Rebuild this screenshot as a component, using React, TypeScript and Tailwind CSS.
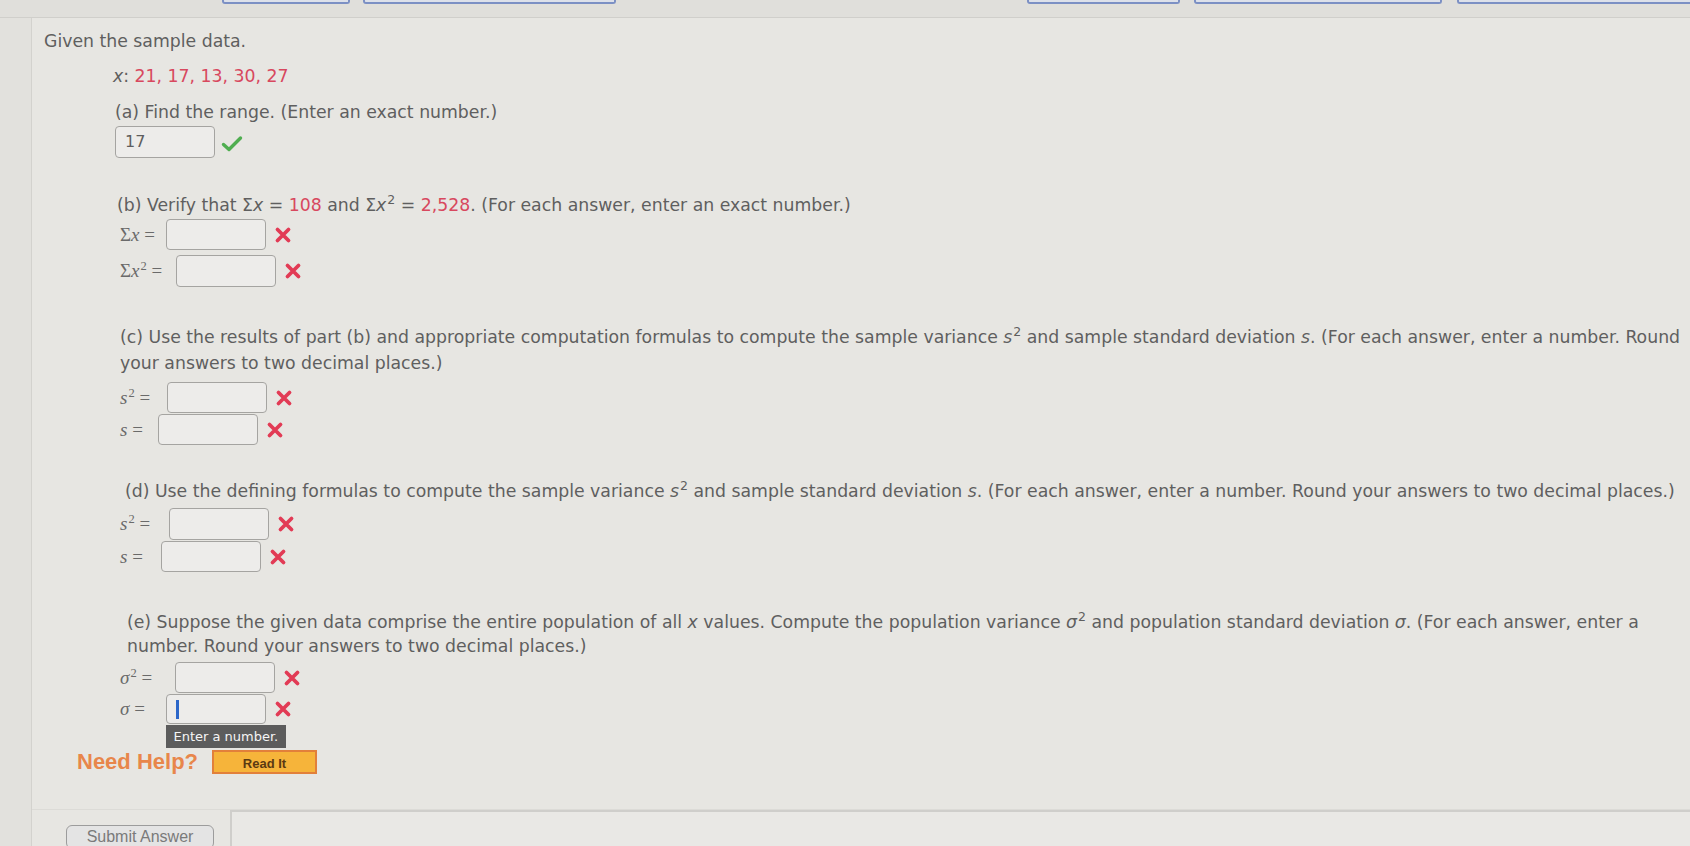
import type { ReactNode } from "react";

const XMark = () => (
  <svg width="18" height="18" viewBox="0 0 18 18" className="shrink-0">
    <path d="M3.5 3.5 L14.5 14.5 M14.5 3.5 L3.5 14.5" stroke="#e23b55" strokeWidth="3.8" strokeLinecap="round" fill="none" />
  </svg>
);

const Check = () => (
  <svg width="22" height="18" viewBox="0 0 22 18" className="shrink-0">
    <path d="M2.5 9.5 L8 14.5 L19.5 3" stroke="#4fae50" strokeWidth="3.4" strokeLinecap="round" strokeLinejoin="round" fill="none" />
  </svg>
);

const Red = ({ children }: { children: ReactNode }) => <span className="text-[#d8485e]">{children}</span>;
const V = ({ children }: { children: ReactNode }) => <i>{children}</i>;
const Sup = ({ children }: { children: ReactNode }) => (
  <sup className="text-[12.5px] relative -top-[7px] ml-[1px]">{children}</sup>
);

function AnswerBox({ value, caret, children }: { value?: string; caret?: boolean; children?: ReactNode }) {
  return (
    <div className="relative w-[100px] h-full rounded-[4px] border border-[#a5a4a1] bg-[#edecea] flex items-center px-[9px] text-[16px] text-[#5e5e5e]">
      {value}
      {caret && <div className="w-[3px] h-[19px] bg-[#2c67c9]" />}
      {children}
    </div>
  );
}

function Row({
  label,
  h = "h-[31px]",
  mt,
  gap = "mr-[10px]",
  caret,
  tooltip,
}: {
  label: ReactNode;
  h?: string;
  mt: string;
  gap?: string;
  caret?: boolean;
  tooltip?: boolean;
}) {
  return (
    <div className={`flex items-center ${h} ${mt}`}>
      <span className={`font-['Liberation_Serif',serif] text-[19px] text-[#6a6a6a] whitespace-nowrap ${gap}`}>{label}</span>
      <AnswerBox caret={caret}>
        {tooltip && (
          <div className="absolute left-[-1px] top-[30px] w-[120px] h-[23px] bg-[#5c5c5c] text-[#f5f5f5] text-[13px] flex items-center justify-center">
            Enter a number.
          </div>
        )}
      </AnswerBox>
      <div className="ml-[8px]">
        <XMark />
      </div>
    </div>
  );
}

export default function App() {
  return (
    <div className="w-full h-[846px] overflow-hidden bg-[#e7e6e2] font-['DejaVu_Sans',sans-serif] text-[#5f5f5f]">
      {/* tab strip */}
      <div className="h-[18px] bg-[#e0dfdb] border-b border-[#d0cfcb] flex items-start">
        <div className="ml-[222px] w-[128px] h-[4px] rounded-b-[3px] border-x-2 border-b-2 border-[#7c90c4] bg-[#dde1ea]" />
        <div className="ml-[13px] w-[253px] h-[4px] rounded-b-[3px] border-x-2 border-b-2 border-[#7c90c4] bg-[#dde1ea]" />
        <div className="ml-[411px] w-[153px] h-[4px] rounded-b-[3px] border-x-2 border-b-2 border-[#7c90c4] bg-[#dde1ea]" />
        <div className="ml-[14px] w-[248px] h-[4px] rounded-b-[3px] border-x-2 border-b-2 border-[#7c90c4] bg-[#dde1ea]" />
        <div className="ml-[15px] flex-1 h-[4px] rounded-bl-[3px] border-l-2 border-b-2 border-[#7c90c4] bg-[#dde1ea]" />
      </div>

      <div className="flex h-[828px]">
        <div className="w-[32px] shrink-0 bg-[#e2e1dd] border-r border-[#d3d2ce]" />

        <div className="flex-1 flex flex-col">
          <div className="pl-[12px] text-[17.3px] leading-[24px]">
            <p className="mt-[11px]">Given the sample data.</p>

            <div className="pl-[76px]">
              <p className="mt-[11px] -ml-[7px]">
                <V>x</V>: <Red>21, 17, 13, 30, 27</Red>
              </p>

              <p className="mt-[12px] -ml-[5px]">(a) Find the range. (Enter an exact number.)</p>
              <div className="flex items-center h-[32px] mt-[2px] -ml-[5px]">
                <AnswerBox value="17" />
                <div className="ml-[6px] mt-[4px]">
                  <Check />
                </div>
              </div>

              <p className="mt-[35px] -ml-[3px]">
                (b) Verify that Σ<V>x</V> = <Red>108</Red> and Σ<V>x</V>
                <Sup>2</Sup> = <Red>2,528</Red>. (For each answer, enter an exact number.)
              </p>
              <Row mt="mt-[2px]" gap="mr-[11px]" label={<>Σ<i>x</i> =</>} />
              <Row
                mt="mt-[5px]"
                h="h-[32px]"
                gap="mr-[14px]"
                label={
                  <>
                    Σ<i>x</i>
                    <Sup>2</Sup> =
                  </>
                }
              />

              <p className="mt-[37px] leading-[26px]">
                (c) Use the results of part (b) and appropriate computation formulas to compute the sample variance <V>s</V>
                <Sup>2</Sup> and sample standard deviation <V>s</V>. (For each answer, enter a number. Round your answers to
                two decimal places.)
              </p>
              <Row
                mt="mt-[6px]"
                gap="mr-[17px]"
                label={
                  <>
                    <i>s</i>
                    <Sup>2</Sup> =
                  </>
                }
              />
              <Row mt="mt-[1px]" gap="mr-[15px]" label={<><i>s</i> =</>} />

              <p className="mt-[34px] ml-[5px]">
                (d) Use the defining formulas to compute the sample variance <V>s</V>
                <Sup>2</Sup> and sample standard deviation <V>s</V>. (For each answer, enter a number. Round your answers to
                two decimal places.)
              </p>
              <Row
                mt="mt-[5px]"
                h="h-[32px]"
                gap="mr-[19px]"
                label={
                  <>
                    <i>s</i>
                    <Sup>2</Sup> =
                  </>
                }
              />
              <Row mt="mt-[1px]" gap="mr-[18px]" label={<><i>s</i> =</>} />

              <p className="mt-[38px] ml-[7px] pr-[40px]">
                (e) Suppose the given data comprise the entire population of all <V>x</V> values. Compute the population
                variance <V>σ</V>
                <Sup>2</Sup> and population standard deviation <V>σ</V>. (For each answer, enter a number. Round your answers
                to two decimal places.)
              </p>
              <Row
                mt="mt-[4px]"
                gap="mr-[23px]"
                label={
                  <>
                    <i>σ</i>
                    <Sup>2</Sup> =
                  </>
                }
              />
              <Row mt="mt-[1px]" h="h-[30px]" gap="mr-[21px]" caret tooltip label={<><i>σ</i> =</>} />
            </div>

            <div className="flex items-center mt-[26px] ml-[33px] h-[24px]">
              <span className="font-['Liberation_Sans',sans-serif] font-bold text-[22px] text-[#e8864b]">Need Help?</span>
              <button className="ml-[14px] w-[105px] h-[24px] bg-[#f6b43a] border-2 border-[#e2803a] font-['Liberation_Sans',sans-serif] font-bold text-[13px] text-[#5b3a12]">
                Read It
              </button>
            </div>
          </div>

          <div className="mt-[35px] flex-1 flex border-t border-[#dcdbd7]">
            <div className="w-[198px] shrink-0 pl-[34px] pt-[15px]">
              <button className="w-[148px] h-[24px] rounded-[6px] border-[1.5px] border-[#9c9c9c] bg-[#e4e4e4] font-['Liberation_Sans',sans-serif] text-[16px] text-[#7a7a7a] leading-none">
                Submit Answer
              </button>
            </div>
            <div className="flex-1 border-l-2 border-t-2 border-[#cfcecb] bg-[#e9e8e5]" />
          </div>
        </div>
      </div>
    </div>
  );
}
